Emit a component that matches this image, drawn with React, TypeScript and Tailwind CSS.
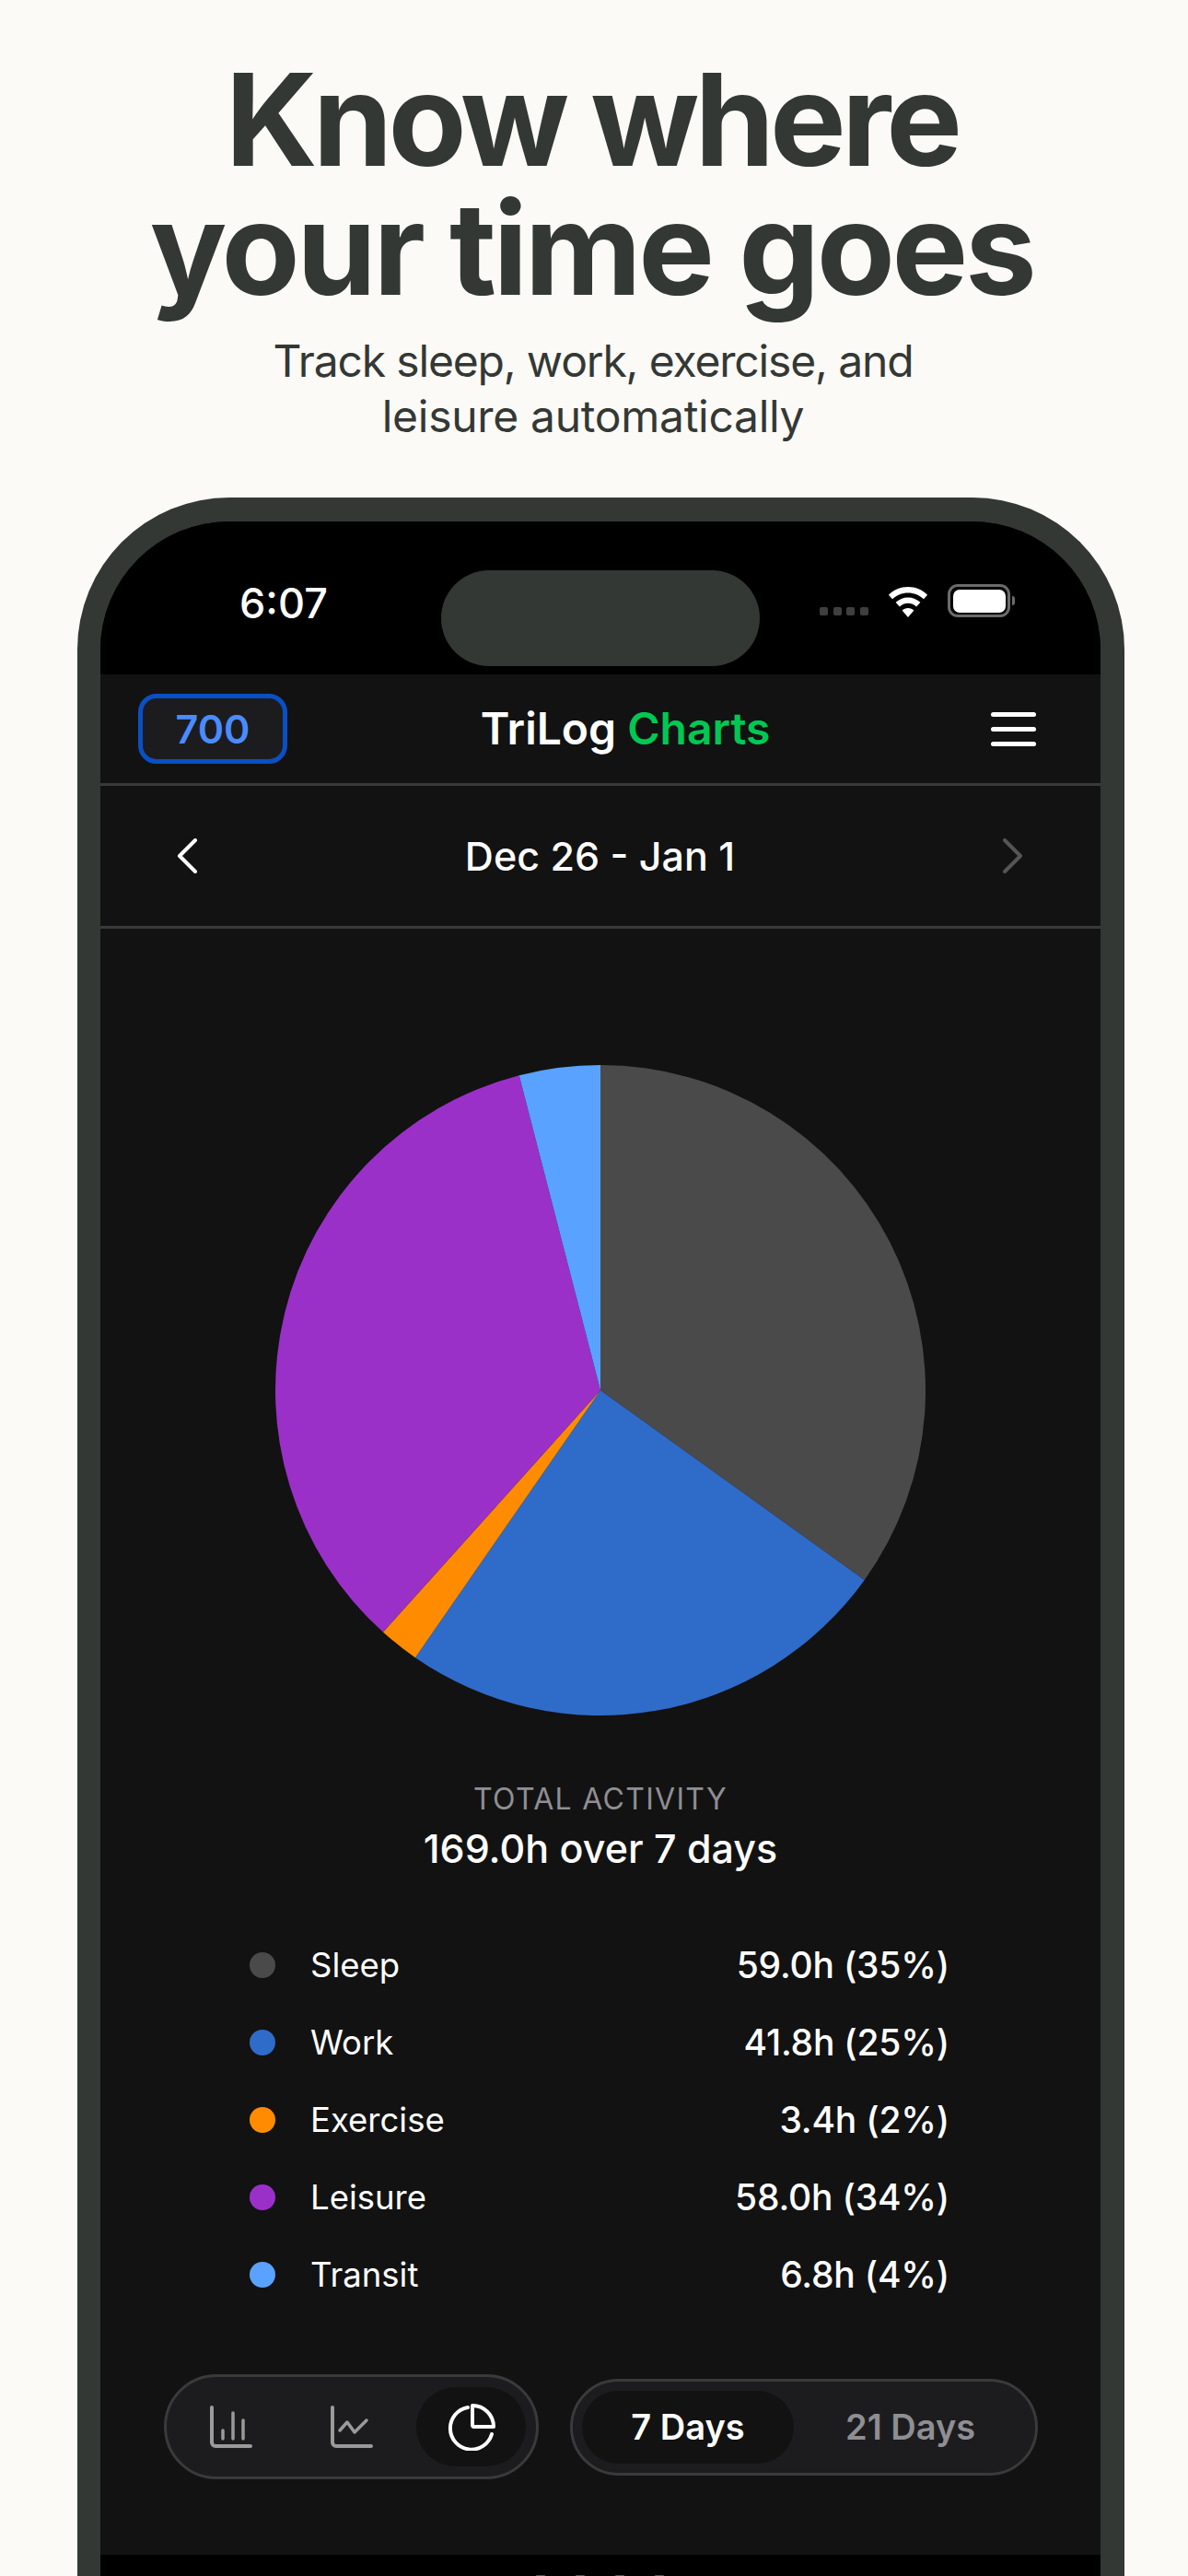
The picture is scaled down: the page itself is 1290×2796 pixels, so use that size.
const sans = "font-['Inter',sans-serif]";

const slices = [
  { label: "Sleep", value: "59.0h (35%)", hours: 59, color: "#4a4a4a" },
  { label: "Work", value: "41.8h (25%)", hours: 41.8, color: "#2f6bc9" },
  { label: "Exercise", value: "3.4h (2%)", hours: 3.4, color: "#ff8c00" },
  { label: "Leisure", value: "58.0h (34%)", hours: 58, color: "#9b30c9" },
  { label: "Transit", value: "6.8h (4%)", hours: 6.8, color: "#5aa2ff" },
];

function PieChart() {
  const total = slices.reduce((sum, s) => sum + s.hours, 0);
  let start = 0;
  return (
    <svg width="706" height="706" viewBox="-353 -353 706 706">
      {slices.map((s) => {
        const end = start + (s.hours / total) * Math.PI * 2;
        const x1 = Math.sin(start) * 353;
        const y1 = -Math.cos(start) * 353;
        const x2 = Math.sin(end) * 353;
        const y2 = -Math.cos(end) * 353;
        const large = end - start > Math.PI ? 1 : 0;
        start = end;
        return <path key={s.label} d={`M0 0L${x1} ${y1}A353 353 0 ${large} 1 ${x2} ${y2}Z`} fill={s.color} />;
      })}
    </svg>
  );
}

function StatusIcons() {
  return (
    <div className="flex items-end">
      <div className="mb-[2px] mr-[21px] flex gap-[5.700px]">
        {[0, 1, 2, 3].map((i) => (
          <span key={i} className="h-[9px] w-[9px] rounded-[2px] bg-[#3f3f3f]" />
        ))}
      </div>
      <svg width="44" height="33" viewBox="0 0 46 36" fill="#fff" className="mr-[21px]">
        <path d="M23 0C14 0 6 3.6 0 9.5l4.5 5C9.4 9.800 16 7 23 7s13.600 2.800 18.500 7.500l4.500-5C40 3.600 32 0 23 0z" />
        <path d="M23 12.500c-5.600 0-10.800 2.200-14.600 5.900l4.600 5c2.600-2.500 6.100-4 10-4s7.400 1.500 10 4l4.600-5C33.800 14.700 28.600 12.500 23 12.500z" />
        <path d="M23 25c-2.700 0-5.100 1-7 2.700L23 36l7-8.300C28.100 26 25.700 25 23 25z" />
      </svg>
      <div className="flex items-center">
        <div className="flex h-[36px] w-[68px] items-center justify-center rounded-[11px] border-[3px] border-[#6b6b6b]">
          <div className="h-[25px] w-[57px] rounded-[7px] bg-white" />
        </div>
        <span className="ml-[2px] h-[10px] w-[3px] rounded-r-[3px] bg-[#6b6b6b]" />
      </div>
    </div>
  );
}

function BarsIcon() {
  return (
    <svg width="46" height="46" viewBox="0 0 46 46" fill="none" stroke="#9a9a9a" strokeLinecap="round">
      <path d="M2 2v38a4 4 0 0 0 4 4h38" strokeWidth="4" />
      <path d="M14 27v9M25 8v28M36 16v20" strokeWidth="3.500" />
    </svg>
  );
}

function LineIcon() {
  return (
    <svg width="46" height="46" viewBox="0 0 46 46" fill="none" stroke="#9a9a9a" strokeLinecap="round" strokeLinejoin="round">
      <path d="M2 2v38a4 4 0 0 0 4 4h38" strokeWidth="4" />
      <path d="M10 27l8-9 8 11 13-13" strokeWidth="3.500" />
    </svg>
  );
}

function PieIcon() {
  return (
    <svg width="52" height="52" viewBox="0 0 52 52" fill="none" stroke="#fff" strokeWidth="4" strokeLinecap="round" strokeLinejoin="round">
      <path d="M22 5A23 23 0 1 0 48 34" />
      <path d="M27 3a23 23 0 0 1 23 23H29a2 2 0 0 1-2-2z" />
    </svg>
  );
}

export default function App() {
  return (
    <div className={`h-[2796px] w-[1290px] overflow-hidden bg-[#fbfaf6] ${sans}`}>
      <div className="flex flex-col items-center pt-[60px] text-[#343835]">
        <h1 className="pr-[5px] text-center text-[139px] font-bold leading-[140px]">
          <span className="tracking-[-4.900px]">Know where</span>
          <br />
          <span className="tracking-[-3.400px]">your time goes</span>
        </h1>
        <p className="mt-[22px] pr-[2px] text-center text-[48px] leading-[60px]">
          <span className="tracking-[-1.150px]">Track sleep, work, exercise, and</span>
          <br />
          <span className="tracking-[-0.300px]">leisure automatically</span>
        </p>
      </div>

      <div className="ml-[84px] mt-[58px] h-[2400px] w-[1137px] rounded-t-[165px] border-l-[25px] border-r-[26px] border-t-[26px] border-[#343835] bg-black">
        <div className="h-[2207px] overflow-hidden rounded-t-[140px] bg-black">
          <div className="relative h-[166px]">
            <span className="absolute left-[151px] top-[64px] text-[45px] font-medium leading-[50px] text-white">6:07</span>
            <div className="absolute left-[370px] top-[53px] h-[104px] w-[346px] rounded-[52px] bg-[#343835]" />
            <div className="absolute right-[93px] top-[68px]">
              <StatusIcons />
            </div>
          </div>

          <div className="flex h-[2041px] flex-col bg-[#121212] text-white">
            <div className="relative flex h-[121px] items-center justify-between border-b-[3px] border-[#3a3a3c] pl-[41px] pr-[70px]">
              <div className="flex h-[76px] w-[162px] items-center justify-center rounded-[20px] border-[5px] border-[#0a4fc4] bg-[#1c1c1e] text-[43px] font-semibold text-[#4a8bff]">
                700
              </div>
              <div className="absolute inset-x-0 flex justify-center pl-[54px] text-[48px] font-semibold">
                <span>
                  TriLog <span className="text-[#00c853]">Charts</span>
                </span>
              </div>
              <div className="flex flex-col gap-[11px]">
                {[0, 1, 2].map((i) => (
                  <span key={i} className="block h-[5px] w-[49px] rounded-full bg-white" />
                ))}
              </div>
            </div>

            <div className="flex h-[155px] items-center justify-between border-b-[3px] border-[#3a3a3c] pl-[83px] pr-[84px]">
              <svg width="22" height="38" viewBox="0 0 22 38" fill="none" stroke="#fff" strokeWidth="4" strokeLinecap="round" strokeLinejoin="round">
                <path d="M20 2L3 19l17 17" />
              </svg>
              <span className="text-[43px] font-medium">Dec 26 - Jan 1</span>
              <svg width="22" height="38" viewBox="0 0 22 38" fill="none" stroke="#555" strokeWidth="4" strokeLinecap="round" strokeLinejoin="round">
                <path d="M2 2l17 17L2 36" />
              </svg>
            </div>

            <div className="flex flex-col items-center pt-[148px]">
              <PieChart />
              <p className="mt-[72px] text-[32px] leading-[38px] tracking-[1.300px] text-[#8e8e93]">TOTAL ACTIVITY</p>
              <p className="mt-[6px] text-[43px] font-medium leading-[56px]">169.0h over 7 days</p>
            </div>

            <div className="mt-[57px] flex flex-col pl-[162px] pr-[164px]">
              {slices.map((s) => (
                <div key={s.label} className="flex h-[84px] items-center">
                  <span className="h-[28px] w-[28px] rounded-full" style={{ backgroundColor: s.color }} />
                  <span className="ml-[38px] flex-1 text-[36.500px]">{s.label}</span>
                  <span className="text-[39px] font-medium tracking-[-0.200px]">{s.value}</span>
                </div>
              ))}
            </div>

            <div className="mt-[66px] flex items-center pl-[69px]">
              <div className="flex h-[114px] w-[407px] items-center rounded-full border-[3px] border-[#3a3a3c] bg-[#1c1c1e] pl-[47px] pr-[11px]">
                <BarsIcon />
                <div className="ml-[85px]">
                  <LineIcon />
                </div>
                <div className="ml-auto flex h-[86px] w-[119px] items-center justify-center rounded-full bg-[#121212]">
                  <PieIcon />
                </div>
              </div>
              <div className="ml-[34px] flex h-[105px] w-[508px] items-center rounded-full border-[3px] border-[#3a3a3c] bg-[#1c1c1e] pl-[10px] text-[38px] font-semibold">
                <div className="flex h-[79px] w-[230px] items-center justify-center rounded-full bg-[#121212]">7 Days</div>
                <span className="ml-[56px] text-[#8e8e93]">21 Days</span>
              </div>
            </div>
          </div>
        </div>

        <div className="ml-[473px] mt-[22px] flex gap-[33px]">
          {[0, 1, 2, 3].map((i) => (
            <span key={i} className="h-[1px] w-[10px] rounded-t-full bg-[#555555]" />
          ))}
        </div>
      </div>
    </div>
  );
}
